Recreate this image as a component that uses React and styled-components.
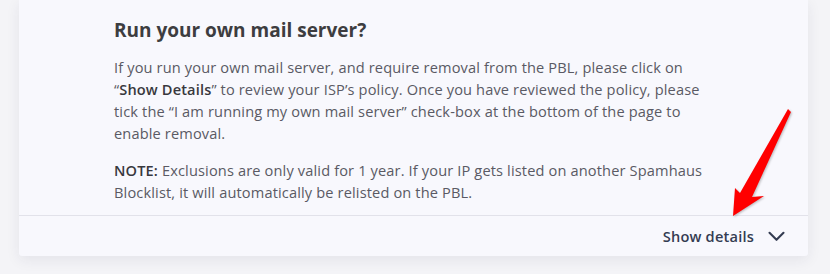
import React from 'react';
import styled, { createGlobalStyle } from 'styled-components';

const GlobalStyle = createGlobalStyle`
  html, body {
    margin: 0;
    padding: 0;
    background: #f4f4f7;
  }
  body {
    font-family: "Open Sans", "Liberation Sans", sans-serif;
  }
`;

const Page = styled.div`
  position: relative;
  width: 830px;
  height: 274px;
  padding: 0 22px 0 19px;
  box-sizing: border-box;
  overflow: hidden;
`;

const Card = styled.section`
  background: #f8f8fd;
  box-shadow: 0 4px 14px rgba(40, 40, 80, 0.08);
  border-radius: 0 0 3px 3px;
`;

const Body = styled.div`
  padding: 16px 40px 12px 95px;
`;

const Title = styled.h3`
  margin: 0 0 12px;
  font-size: 19px;
  line-height: 28px;
  font-weight: 700;
  color: #3d3d40;
`;

const Text = styled.p`
  margin: 0 0 15px;
  font-size: 14.6px;
  line-height: 22px;
  color: #5a5a64;
  letter-spacing: 0.14px;
  white-space: nowrap;

  &:last-child {
    margin-bottom: 0;
  }

  b {
    font-weight: 600;
    color: #38383d;
  }
`;

const Footer = styled.div`
  display: flex;
  justify-content: flex-end;
  align-items: center;
  height: 41px;
  padding-right: 23px;
  border-top: 1px solid #e2e2ea;
  box-sizing: border-box;
`;

const Toggle = styled.button`
  display: flex;
  align-items: center;
  gap: 14px;
  border: 0;
  padding: 0;
  background: none;
  font-family: inherit;
  font-size: 14.6px;
  font-weight: 600;
  letter-spacing: 0.2px;
  color: #343c52;
  cursor: pointer;
`;

const Chevron = () => (
  <svg width="17" height="11" viewBox="0 0 17 11" fill="none">
    <polyline points="1.5,1.8 8.5,8.8 15.5,1.8" stroke="#343c52" strokeWidth="2.1" strokeLinecap="round" strokeLinejoin="round" />
  </svg>
);

const Arrow = styled.svg`
  position: absolute;
  left: 0;
  top: 0;
  pointer-events: none;
  filter: drop-shadow(1px 1px 1px rgba(0, 0, 0, 0.25));
`;

export default function App() {
  return (
    <>
      <GlobalStyle />
      <Page>
        <Card>
          <Body>
            <Title>Run your own mail server?</Title>
            <Text>
              If you run your own mail server, and require removal from the PBL, please click on<br />
              “<b>Show Details</b>” to review your ISP’s policy. Once you have reviewed the policy, please<br />
              tick the “I am running my own mail server” check-box at the bottom of the page to<br />
              enable removal.
            </Text>
            <Text>
              <b>NOTE:</b> Exclusions are only valid for 1 year. If your IP gets listed on another Spamhaus<br />
              Blocklist, it will automatically be relisted on the PBL.
            </Text>
          </Body>
          <Footer>
            <Toggle>
              Show details
              <Chevron />
            </Toggle>
          </Footer>
        </Card>
        <Arrow width="830" height="274" viewBox="0 0 830 274">
          <polygon
            points="788,109 791,112 752,197 764,196 733,216 735,188 740,193"
            fill="#ff0000"
          />
        </Arrow>
      </Page>
    </>
  );
}
